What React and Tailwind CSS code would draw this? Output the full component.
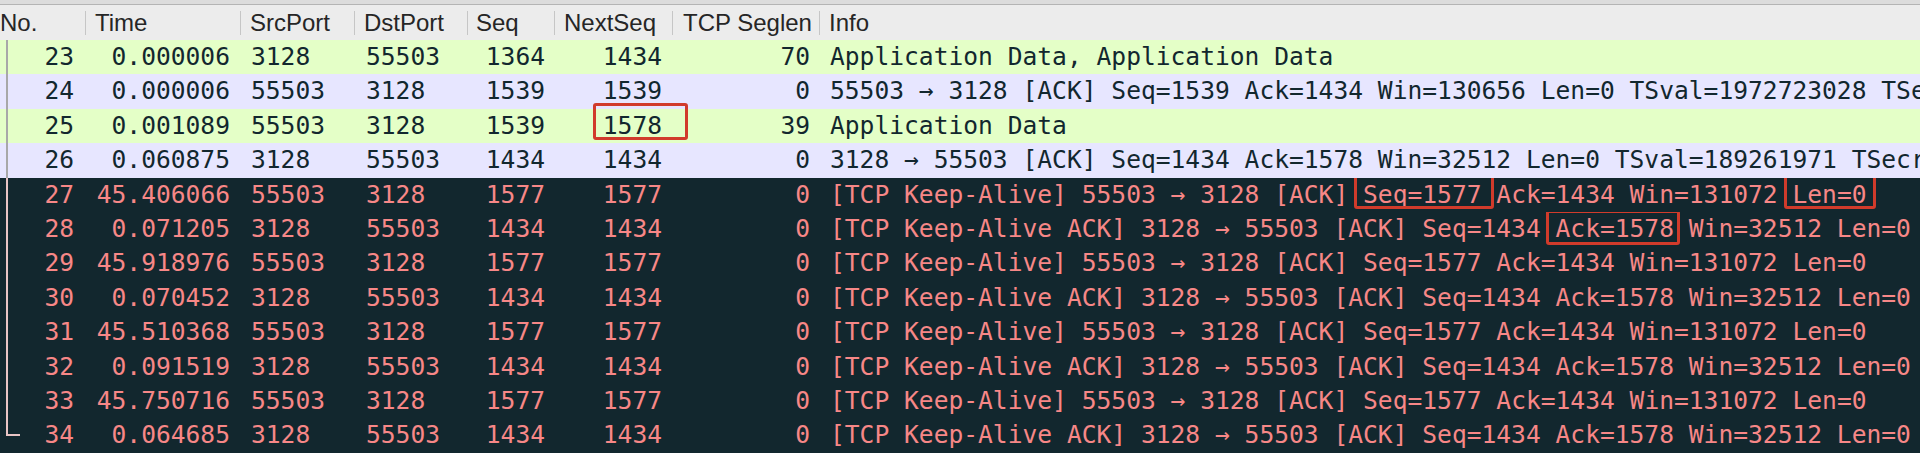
import React from 'react';

// packet list columns: header label, width, alignment and cell padding
const cols = [
  { key: 'no', label: 'No.', w: 'w-[86px]', head: 'pl-0', cell: 'justify-end pr-[12px]' },
  { key: 'time', label: 'Time', w: 'w-[155px]', head: 'pl-[9px]', cell: 'justify-end pr-[11px]' },
  { key: 'src', label: 'SrcPort', w: 'w-[114px]', head: 'pl-[9px]', cell: 'justify-start pl-[10px]' },
  { key: 'dst', label: 'DstPort', w: 'w-[113px]', head: 'pl-[9px]', cell: 'justify-start pl-[11px]' },
  { key: 'seq', label: 'Seq', w: 'w-[87px]', head: 'pl-[8px]', cell: 'justify-end pr-[10px]' },
  { key: 'next', label: 'NextSeq', w: 'w-[118px]', head: 'pl-[9px]', cell: 'justify-end pr-[11px]' },
  { key: 'len', label: 'TCP Seglen', w: 'w-[147px]', head: 'pl-[10px]', cell: 'justify-end pr-[10px]' },
];

const kaInfo = [
  '[TCP Keep-Alive] 55503 → 3128 [ACK] ',
  'Seq=1577',
  ' Ack=1434 Win=131072 ',
  'Len=0',
];
const kaAckInfo = [
  '[TCP Keep-Alive ACK] 3128 → 55503 [ACK] Seq=1434 ',
  'Ack=1578',
  ' Win=32512 Len=0 TSval=189306982 TSecr=1972768434',
];

const rows = [
  { no: 23, time: '0.000006', src: '3128', dst: '55503', seq: '1364', next: '1434', len: '70', info: ['Application Data, Application Data'], kind: 'green' },
  { no: 24, time: '0.000006', src: '55503', dst: '3128', seq: '1539', next: '1539', len: '0', info: ['55503 → 3128 [ACK] Seq=1539 Ack=1434 Win=130656 Len=0 TSval=1972723028 TSecr=189261918'], kind: 'tcp' },
  { no: 25, time: '0.001089', src: '55503', dst: '3128', seq: '1539', next: '1578', len: '39', info: ['Application Data'], kind: 'green', boxNext: true },
  { no: 26, time: '0.060875', src: '3128', dst: '55503', seq: '1434', next: '1434', len: '0', info: ['3128 → 55503 [ACK] Seq=1434 Ack=1578 Win=32512 Len=0 TSval=189261971 TSecr=1972723028'], kind: 'tcp' },
  { no: 27, time: '45.406066', src: '55503', dst: '3128', seq: '1577', next: '1577', len: '0', info: kaInfo, kind: 'bad', boxes: [1, 3] },
  { no: 28, time: '0.071205', src: '3128', dst: '55503', seq: '1434', next: '1434', len: '0', info: kaAckInfo, kind: 'bad', boxes: [1] },
  { no: 29, time: '45.918976', src: '55503', dst: '3128', seq: '1577', next: '1577', len: '0', info: kaInfo, kind: 'bad' },
  { no: 30, time: '0.070452', src: '3128', dst: '55503', seq: '1434', next: '1434', len: '0', info: kaAckInfo, kind: 'bad' },
  { no: 31, time: '45.510368', src: '55503', dst: '3128', seq: '1577', next: '1577', len: '0', info: kaInfo, kind: 'bad' },
  { no: 32, time: '0.091519', src: '3128', dst: '55503', seq: '1434', next: '1434', len: '0', info: kaAckInfo, kind: 'bad' },
  { no: 33, time: '45.750716', src: '55503', dst: '3128', seq: '1577', next: '1577', len: '0', info: kaInfo, kind: 'bad' },
  { no: 34, time: '0.064685', src: '3128', dst: '55503', seq: '1434', next: '1434', len: '0', info: kaAckInfo, kind: 'bad', last: true },
];

const rowColors = {
  green: 'bg-[#e4ffc7] text-[#12272e]',
  tcp: 'bg-[#e7e6ff] text-[#12272e]',
  bad: 'bg-[#12272e] text-[#f78787]',
};

// red annotation frame drawn over a piece of text
function Box({ children, className }) {
  return (
    <span className="relative inline-block">
      {children}
      <span className={`absolute border-[3px] border-[#d13b2b] rounded-[3px] ${className}`} />
    </span>
  );
}

const infoBoxes = {
  'Seq=1577': 'top-[-7px] bottom-[3px] left-[-9px] right-[-12px]',
  'Len=0': 'top-[-7px] bottom-[3px] left-[-8px] right-[-9px]',
  'Ack=1578': 'top-[-2px] bottom-[1px] left-[-10px] right-[-6px]',
};

function Row({ r }) {
  const lineColor = r.kind === 'bad' ? 'bg-[#e8c4c4]' : 'bg-[#a8a8a8]';
  return (
    <div className={`flex h-[34.4px] leading-[34.4px] whitespace-pre ${rowColors[r.kind]}`}>
      {cols.map((c) => (
        <div key={c.key} className={`relative flex shrink-0 ${c.w} ${c.cell}`}>
          {c.key === 'no' && (
            <>
              <span className={`absolute left-[6px] top-0 w-[2px] ${lineColor} ${r.last ? 'h-1/2' : 'bottom-0'}`} />
              {r.last && <span className={`absolute left-[6px] top-[16px] h-[2px] w-[14px] ${lineColor}`} />}
            </>
          )}
          {c.key === 'next' && r.boxNext ? (
            <Box className="top-[-6px] bottom-[3px] left-[-10px] right-[-26px]">{r[c.key]}</Box>
          ) : (
            <span>{r[c.key]}</span>
          )}
        </div>
      ))}
      <div className="flex-1 min-w-0 overflow-hidden pl-[10px]">
        {r.info.map((seg, i) =>
          r.boxes && r.boxes.includes(i) ? (
            <Box key={i} className={infoBoxes[seg]}>{seg}</Box>
          ) : (
            <span key={i}>{seg}</span>
          )
        )}
      </div>
    </div>
  );
}

export default function App() {
  return (
    <div className="w-[1920px] h-[453px] overflow-hidden bg-white">
      <div className="h-[5px] bg-[#dcdcdc] border-b border-[#b4b4b4]" />
      <div className="flex h-[35px] bg-[#ececec] text-[#262626] text-[24px] font-['Liberation_Sans',Arial,sans-serif] items-center">
        {cols.map((c) => (
          <div key={c.key} className={`flex shrink-0 items-center justify-between h-full ${c.w}`}>
            <span className={`${c.head} leading-none`}>{c.label}</span>
            <span className="w-px h-[24px] bg-[#c6c6c6]" />
          </div>
        ))}
        <div className="flex-1 pl-[9px] leading-none">Info</div>
      </div>
      <div className="font-['DejaVu_Sans_Mono',monospace] text-[24.6px]">
        {rows.map((r) => (
          <Row key={r.no} r={r} />
        ))}
      </div>
    </div>
  );
}
